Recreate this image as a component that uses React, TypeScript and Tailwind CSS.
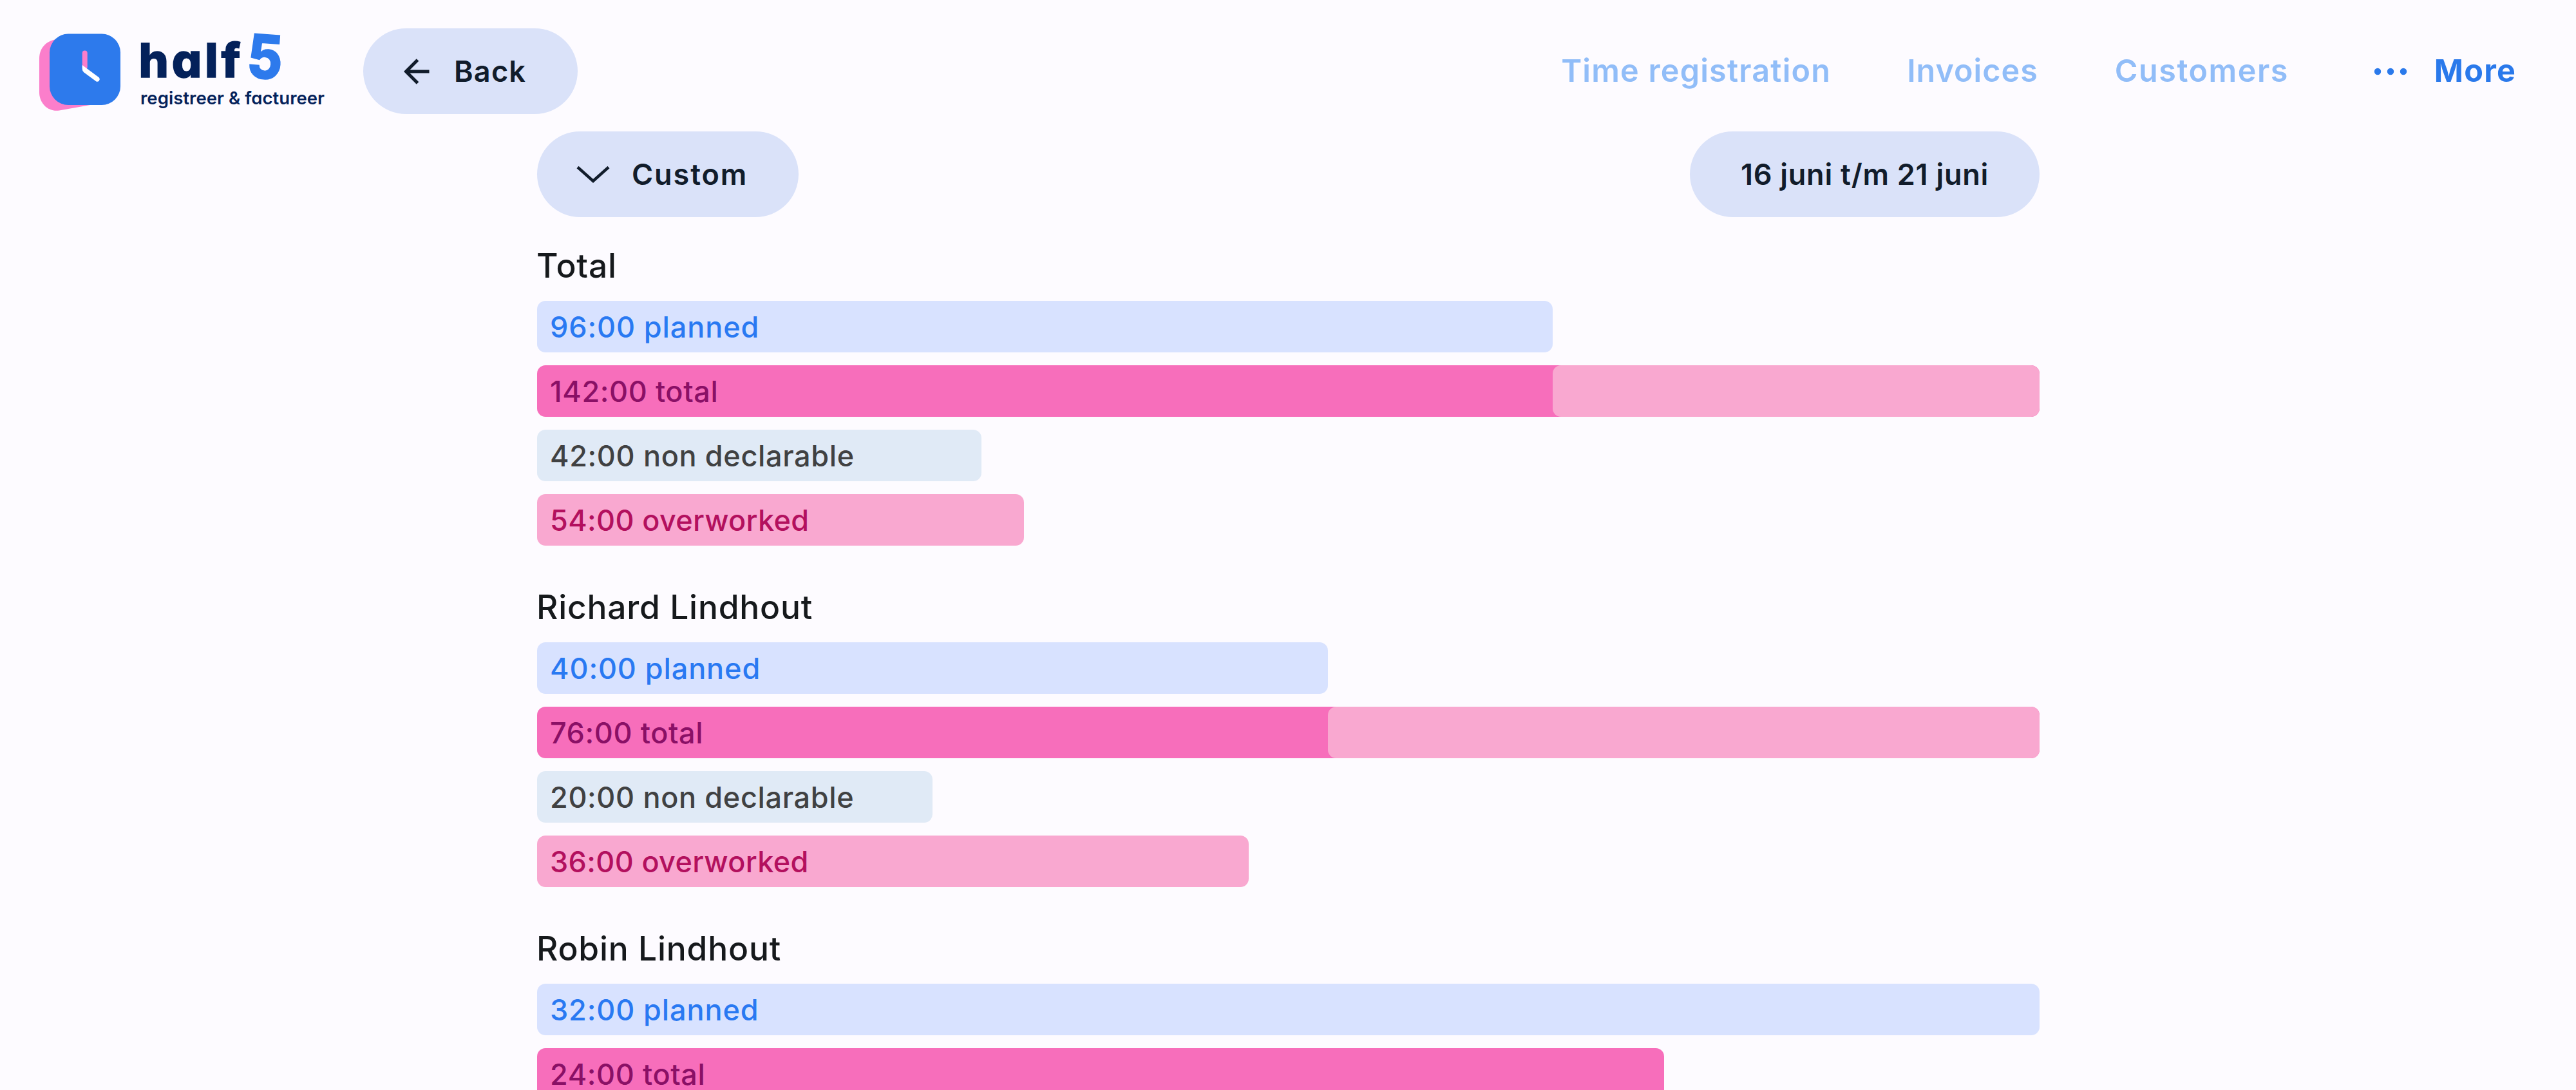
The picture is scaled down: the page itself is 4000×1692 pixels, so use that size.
import clsx from 'clsx';

type BarKind = 'planned' | 'total' | 'nonDeclarable' | 'overworked';

interface Bar {
  kind: BarKind;
  time: string;
  width: number;
  // part of the bar that lies above the planned hours
  overflow?: number;
}

interface Group {
  name: string;
  bars: Bar[];
}

const groups: Group[] = [
  {
    name: 'Total',
    bars: [
      { kind: 'planned', time: '96:00', width: 96 / 142 },
      { kind: 'total', time: '142:00', width: 1, overflow: 46 / 142 },
      { kind: 'nonDeclarable', time: '42:00', width: 42 / 142 },
      { kind: 'overworked', time: '54:00', width: 46 / 142 },
    ],
  },
  {
    name: 'Richard Lindhout',
    bars: [
      { kind: 'planned', time: '40:00', width: 40 / 76 },
      { kind: 'total', time: '76:00', width: 1, overflow: 36 / 76 },
      { kind: 'nonDeclarable', time: '20:00', width: 20 / 76 },
      { kind: 'overworked', time: '36:00', width: 36 / 76 },
    ],
  },
  {
    name: 'Robin Lindhout',
    bars: [
      { kind: 'planned', time: '32:00', width: 1 },
      { kind: 'total', time: '24:00', width: 24 / 32 },
    ],
  },
];

const barStyles: Record<BarKind, { label: string; className: string }> = {
  planned: { label: 'planned', className: 'bg-[#d8e2ff] text-[#2979f2] tracking-[0.9px]' },
  total: { label: 'total', className: 'bg-[#f76ebb] text-[#8a1066] tracking-[0.6px]' },
  nonDeclarable: { label: 'non declarable', className: 'bg-[#e0eaf6] text-[#404142] tracking-[0.65px]' },
  overworked: { label: 'overworked', className: 'bg-[#f9a8d0] text-[#b3105e] tracking-[0.35px]' },
};

function Logo() {
  return (
    <svg viewBox="61 44 448 133" className="w-[448px] h-[133px] shrink-0 overflow-visible" fontFamily="Inter, sans-serif">
      <path
        d="M87 61 C71 64 61 75 61 91 L61 143 C61 161 75 174 92 171.500 L140 163 L140 61 Z"
        fill="#fb7ecb"
      />
      <rect x="77" y="52.500" width="110" height="110.500" rx="29" fill="#2d7aec" />
      <path d="M131.700 82.500 V104" stroke="#fb7ecb" strokeWidth="8" strokeLinecap="round" />
      <path
        d="M127.700 101 L154 120.500 A4 4 0 0 1 149.500 126.600 L130.500 112.600 Q127.700 110.500 127.700 107 Z"
        fill="#fff"
      />
      <g fill="#04215a" className="[font-feature-settings:'cv11']">
        <text x="215.500" y="120" fontSize="73" fontWeight="800" textLength="158" stroke="#04215a" strokeWidth="1.500">half</text>
        <text x="218" y="162.300" fontSize="27.500" fontWeight="600" textLength="286">registreer &amp; factureer</text>
      </g>
      <text
        x="384"
        y="122"
        fontSize="94"
        fontWeight="800"
        fill="#2d7aec"
        stroke="#2d7aec"
        strokeWidth="1.500"
        transform="rotate(4 411 90)"
        textLength="55"
        lengthAdjust="spacingAndGlyphs"
      >
        5
      </text>
    </svg>
  );
}

function ArrowLeftIcon() {
  return (
    <svg viewBox="0 0 40 40" className="w-[40px] h-[40px]" fill="none" stroke="currentColor" strokeWidth="5">
      <path d="M39.500 20 H4 M21.500 2 L3.500 20 L21.500 38" />
    </svg>
  );
}

function ChevronDownIcon() {
  return (
    <svg viewBox="0 0 52 26" className="w-[52px] h-[26px]" fill="none" stroke="currentColor" strokeWidth="4.500">
      <path d="M2 1.500 L26 23 L50 1.500" />
    </svg>
  );
}

function DotsIcon() {
  return (
    <svg viewBox="0 0 52 12" className="w-[52px] h-[12px]" fill="currentColor">
      <circle cx="6" cy="6" r="5.200" />
      <circle cx="26" cy="6" r="5.200" />
      <circle cx="46" cy="6" r="5.200" />
    </svg>
  );
}

const pill = 'flex items-center h-[133px] rounded-full bg-[#dae2f9] text-[#111c2b] text-[45px] font-semibold';

function Header() {
  return (
    <header className="flex items-start h-[204px] pt-[44px] pl-[61px] pr-[93px]">
      <Logo />
      <button className={clsx(pill, 'ml-[55px] w-[333px] pl-[63px] gap-[38px] tracking-[1.2px]')}>
        <ArrowLeftIcon />
        Back
      </button>
      <nav className="ml-auto flex items-center h-[133px] text-[48.5px] font-semibold text-[#91bdf8]">
        <a className="tracking-[1.2px]">Time registration</a>
        <a className="ml-[118px] tracking-[1px]">Invoices</a>
        <a className="ml-[119px] tracking-[1.5px]">Customers</a>
        <a className="ml-[132px] flex items-center gap-[42px] tracking-[1.2px] text-[#2a79eb]">
          <DotsIcon />
          <span className="font-bold">More</span>
        </a>
      </nav>
    </header>
  );
}

function HourBar({ bar }: { bar: Bar }) {
  const { label, className } = barStyles[bar.kind];
  return (
    <div
      className={clsx('relative flex items-center h-20 px-5 pt-px rounded-[13px] overflow-hidden text-[45px] font-medium whitespace-nowrap', className)}
      style={{ width: `${bar.width * 100}%` }}
    >
      {bar.time} {label}
      {bar.overflow && (
        <div
          className="absolute inset-y-0 right-0 rounded-[13px] bg-[#f9a8d0]"
          style={{ width: `${bar.overflow * 100}%` }}
        />
      )}
    </div>
  );
}

export default function App() {
  return (
    <div className="h-[1692px] overflow-hidden bg-[#fdfbff] font-['Inter',sans-serif]">
      <Header />

      <main className="w-[2333px] ml-[834px]">
        {/* Period filter */}
        <div className="flex items-center justify-between">
          <button className={clsx(pill, 'w-[406px] pl-[61px] gap-[34px] tracking-[1.9px]')}>
            <ChevronDownIcon />
            Custom
          </button>
          <button className={clsx(pill, 'w-[543px] justify-center tracking-[0.75px]')}>16 juni t/m 21 juni</button>
        </div>

        {/* Hours per person */}
        <div className="flex flex-col gap-[65px] mt-[45px]">
          {groups.map(group => (
            <section key={group.name}>
              <h2 className="mb-[25px] -ml-px text-[51.5px] leading-[60px] font-medium tracking-[0.8px] text-[#16191c]">
                {group.name}
              </h2>
              <div className="flex flex-col gap-5">
                {group.bars.map(bar => (
                  <HourBar key={bar.kind} bar={bar} />
                ))}
              </div>
            </section>
          ))}
        </div>
      </main>
    </div>
  );
}
